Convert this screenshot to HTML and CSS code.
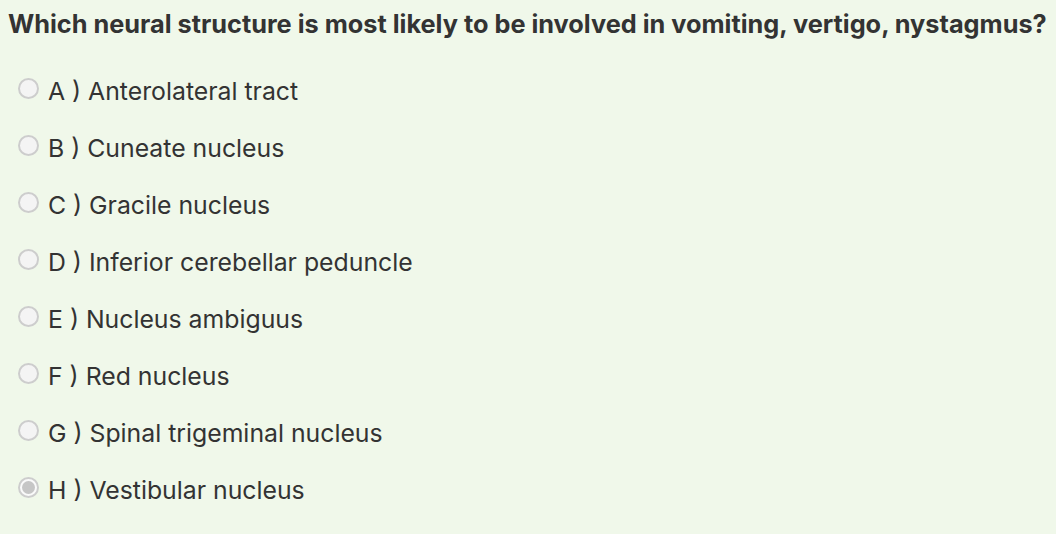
FILE: index.html
```html
<!DOCTYPE html>
<html>
<head>
<meta charset="utf-8">
<link rel="stylesheet" href="styles.css">
</head>
<body>
<div class="quiz">
  <h1 class="question">Which neural structure is most likely to be involved in vomiting, vertigo, nystagmus?</h1>
  <ul class="options">
    <li class="option"><span class="radio"></span><span class="label">A ) Anterolateral tract</span></li>
    <li class="option"><span class="radio"></span><span class="label">B ) Cuneate nucleus</span></li>
    <li class="option"><span class="radio"></span><span class="label">C ) Gracile nucleus</span></li>
    <li class="option"><span class="radio"></span><span class="label">D ) Inferior cerebellar peduncle</span></li>
    <li class="option"><span class="radio"></span><span class="label">E ) Nucleus ambiguus</span></li>
    <li class="option"><span class="radio"></span><span class="label">F ) Red nucleus</span></li>
    <li class="option"><span class="radio"></span><span class="label">G ) Spinal trigeminal nucleus</span></li>
    <li class="option"><span class="radio checked"></span><span class="label">H ) Vestibular nucleus</span></li>
  </ul>
</div>
</body>
</html>
```
FILE: styles.css
```css
html, body {
  margin: 0;
  padding: 0;
  background: #f0f8ea;
}
body {
  font-family: Inter, "Liberation Sans", sans-serif;
  color: #333333;
  width: 1056px;
  height: 534px;
  overflow: hidden;
}
.quiz {
  padding: 8px 0 0 8px;
}
.question {
  margin: 0;
  font-size: 25.3px;
  font-weight: 700;
  line-height: 32px;
  white-space: nowrap;
}
.options {
  list-style: none;
  margin: 0;
  padding: 35px 0 0 10px;
  display: flex;
  flex-direction: column;
  gap: 25px;
}
.option {
  display: flex;
  align-items: center;
  height: 32px;
  gap: 9px;
}
.radio {
  width: 21px;
  height: 21px;
  margin-bottom: 6px;
  border-radius: 50%;
  border: 2px solid #cdcdcd;
  background: #f4f4f4;
  box-sizing: border-box;
  position: relative;
  flex: none;
}
.radio.checked {
  background: #fafafa;
}
.radio.checked::after {
  content: "";
  position: absolute;
  left: 2px;
  top: 2px;
  width: 13px;
  height: 13px;
  border-radius: 50%;
  background: #c6c6c6;
}
.label {
  font-size: 24.8px;
  line-height: 32px;
}
```
